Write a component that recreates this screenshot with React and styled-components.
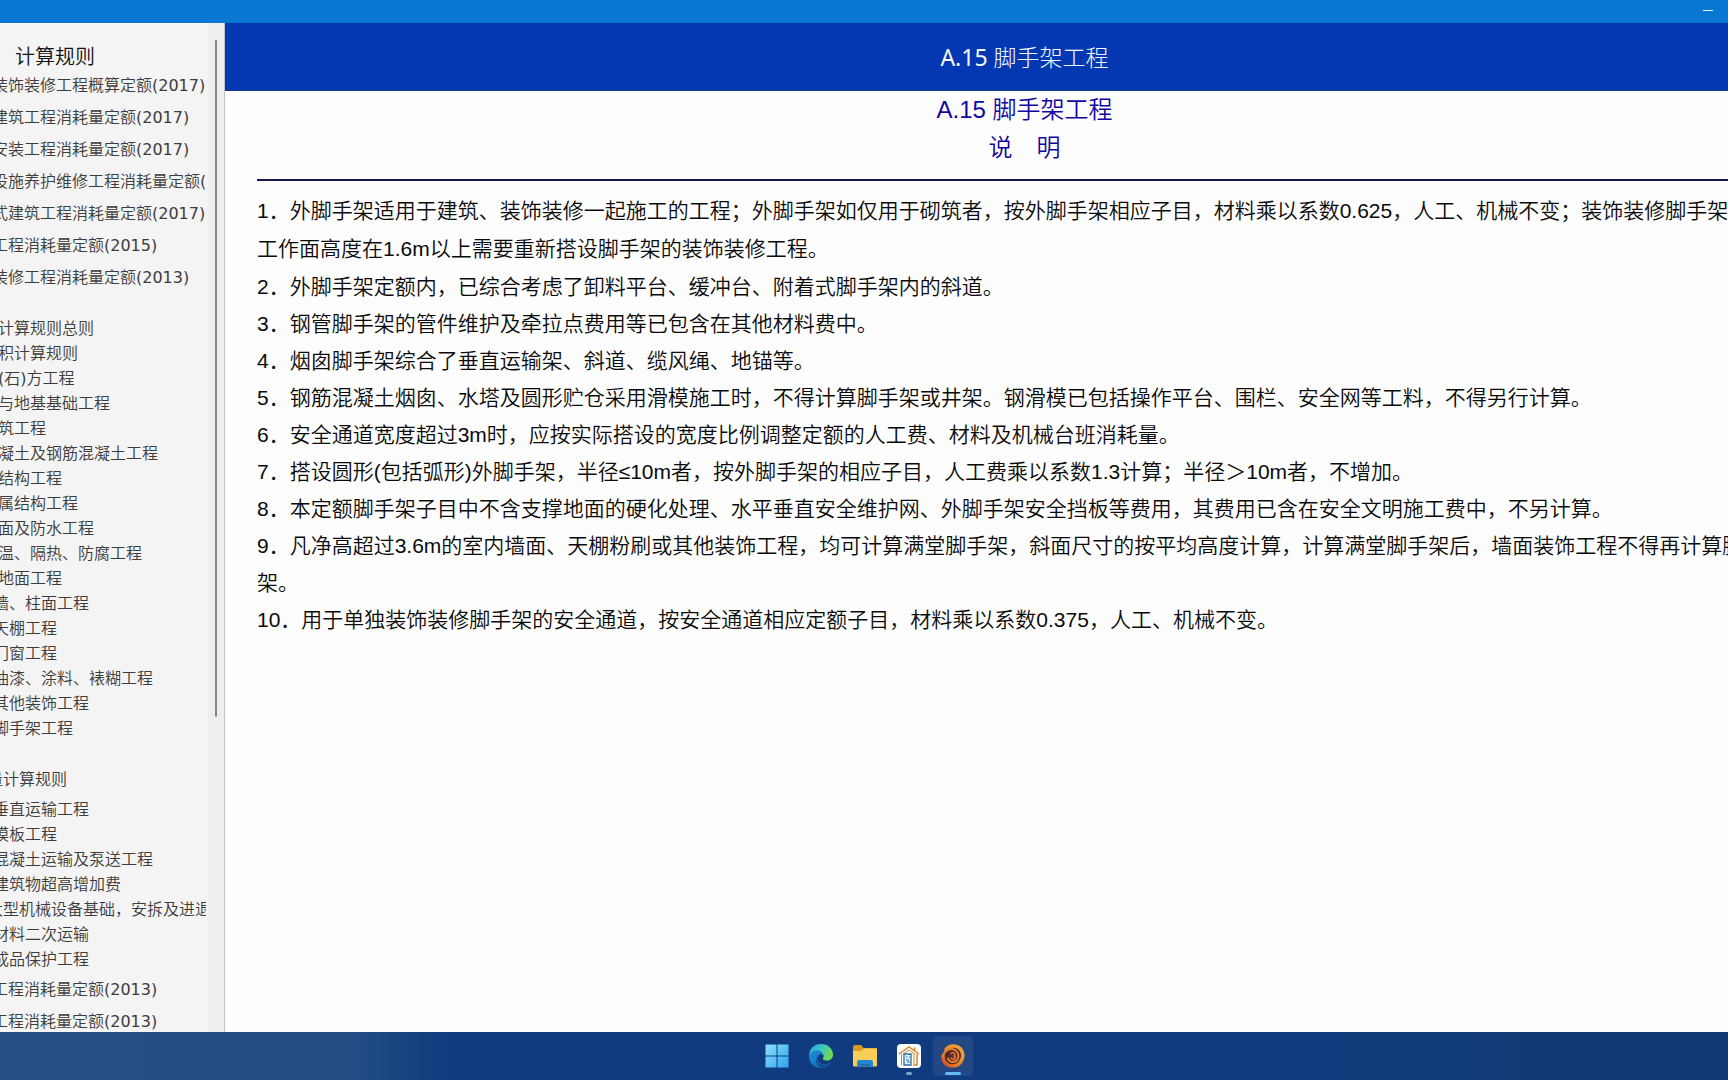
import React from "react";
import styled, { createGlobalStyle } from "styled-components";

const cjk = `"Noto Sans CJK SC DemiLight", "Noto Sans CJK SC", sans-serif`;

const GlobalStyle = createGlobalStyle`
  * { box-sizing: border-box; }
  body { margin: 0; overflow: hidden; background: #fdfdfd; }
  h1, h2, p, ul, ol { margin: 0; padding: 0; font-weight: inherit; }
  button { border: 0; padding: 0; background: none; font: inherit; }
`;

const Screen = styled.div`
  display: flex;
  flex-direction: column;
  height: 100vh;
  overflow: hidden;
  font-family: ${cjk};
  font-weight: 400;
`;

const TitleBar = styled.header`
  display: flex;
  justify-content: flex-end;
  flex: none;
  height: 23px;
  padding-right: 12px;
  background: #0978d3;
`;

const MinimizeButton = styled.button`
  display: flex;
  justify-content: center;
  align-items: center;
  width: 16px;
  height: 20px;
  &::before {
    content: "";
    width: 10px;
    height: 1px;
    background: #e4f6ff;
  }
`;

const Workspace = styled.div`
  display: flex;
  flex: 1;
  min-height: 0;
`;

const Sidebar = styled.nav`
  display: flex;
  flex: none;
  width: 225px;
  overflow: hidden;
  background: #f4f4f4;
  border-right: 1px solid #c4c4c6;
`;

const SidebarBody = styled.div`
  flex: 1;
  min-width: 0;
  overflow: hidden;
  margin-right: 2px;
`;

const SidebarTitle = styled.h2`
  padding: 19px 0 0 15px;
  font-size: 20px;
  line-height: 28px;
  color: #111;
`;

const Group = styled.ul`
  list-style: none;
  margin-left: -16px;
  padding-top: ${(p) => p.$gap || 0}px;
  padding-left: ${(p) => p.$indent}px;
`;

const Entry = styled.a`
  display: block;
  font-family: "DejaVu Sans", ${cjk};
  font-size: 16px;
  line-height: ${(p) => (p.$loose ? 32 : 25)}px;
  white-space: nowrap;
  color: #3c3c3c;
  text-decoration: none;
`;

const ScrollTrack = styled.div`
  flex: none;
  width: 16px;
  padding: 17px 0 0 7px;
  background: #eeeeef;
`;

const ScrollThumb = styled.div`
  width: 2px;
  height: calc(68% + 2px);
  min-height: 40px;
  border-radius: 1px;
  background: #858585;
`;

const Viewport = styled.div`
  flex: 1;
  min-width: 0;
  overflow: hidden;
`;

const Document = styled.main`
  width: calc(100% + 96px);
  color: #0a0a0a;
`;

const Banner = styled.h1`
  height: 68px;
  background: #0438b2;
  border-bottom: 1px solid #173a7c;
  color: #f4fbff;
  font-family: "Noto Sans", "Noto Sans CJK SC Light", ${cjk};
  font-size: 23px;
  line-height: 68px;
  text-align: center;
`;

const Article = styled.article`
  padding: 0 32px;
  font-family: "Liberation Sans", ${cjk};
`;

const Heading = styled.h2`
  font-size: 24px;
  line-height: 38px;
  text-align: center;
  color: #1206a0;
`;

const Clauses = styled.div`
  margin-top: 12px;
  padding-top: 11px;
  border-top: 2px solid #16164f;
  font-size: 21px;
  line-height: 37px;
  p:first-child { line-height: 38px; }
`;

const Taskbar = styled.footer`
  display: flex;
  justify-content: center;
  align-items: center;
  flex: none;
  gap: 4px;
  height: 48px;
  padding-left: 2px;
  background: linear-gradient(90deg, #254f83 0%, #244e83 20%, #103b7e 26%, #103b7e 72%, #113870 100%);
`;

const TaskButton = styled.button`
  position: relative;
  display: flex;
  justify-content: center;
  align-items: center;
  width: 40px;
  height: 40px;
  border-radius: 4px;
  background: ${(p) => (p.$active ? "#224785" : "transparent")};
  &::after {
    content: "";
    position: absolute;
    bottom: 1px;
    width: ${(p) => p.$mark || 0}px;
    height: 3px;
    border-radius: 2px;
    background: ${(p) => (p.$active ? "#62bdf0" : "#7fa5cc")};
  }
`;

const local = [
  "装饰装修工程概算定额(2017)",
  "建筑工程消耗量定额(2017)",
  "安装工程消耗量定额(2017)",
  "设施养护维修工程消耗量定额(2017)",
  "式建筑工程消耗量定额(2017)",
  "工程消耗量定额(2015)",
  "装修工程消耗量定额(2013)",
];
const general = [
  "计算规则总则", "积计算规则", "(石)方工程", "与地基基础工程", "筑工程",
  "凝土及钢筋混凝土工程", "结构工程", "属结构工程", "面及防水工程",
  "温、隔热、防腐工程", "地面工程",
];
const finishing = ["墙、柱面工程", "天棚工程", "门窗工程", "油漆、涂料、裱糊工程", "其他装饰工程", "脚手架工程"];
const measuresHead = ["量计算规则"];
const measures = ["垂直运输工程", "模板工程", "混凝土运输及泵送工程", "建筑物超高增加费"];
const machinery = ["大型机械设备基础，安拆及进退场"];
const measuresEnd = ["材料二次运输", "成品保护工程"];
const older = ["工程消耗量定额(2013)", "工程消耗量定额(2013)"];

const groups = [
  { items: local, indent: 8, loose: true },
  { items: general, indent: 14, gap: 22 },
  { items: finishing, indent: 9 },
  { items: measuresHead, indent: 3, gap: 26 },
  { items: measures, indent: 9, gap: 5 },
  { items: machinery, indent: 3 },
  { items: measuresEnd, indent: 9 },
  { items: older, indent: 8, gap: 2, loose: true },
];

const clauses = [
  "1．外脚手架适用于建筑、装饰装修一起施工的工程；外脚手架如仅用于砌筑者，按外脚手架相应子目，材料乘以系数0.625，人工、机械不变；装饰装修脚手架适用于工作面高度在1.6m以上需要重新搭设脚手架的装饰装修工程。",
  "2．外脚手架定额内，已综合考虑了卸料平台、缓冲台、附着式脚手架内的斜道。",
  "3．钢管脚手架的管件维护及牵拉点费用等已包含在其他材料费中。",
  "4．烟囱脚手架综合了垂直运输架、斜道、缆风绳、地锚等。",
  "5．钢筋混凝土烟囱、水塔及圆形贮仓采用滑模施工时，不得计算脚手架或井架。钢滑模已包括操作平台、围栏、安全网等工料，不得另行计算。",
  "6．安全通道宽度超过3m时，应按实际搭设的宽度比例调整定额的人工费、材料及机械台班消耗量。",
  "7．搭设圆形(包括弧形)外脚手架，半径≤10m者，按外脚手架的相应子目，人工费乘以系数1.3计算；半径＞10m者，不增加。",
  "8．本定额脚手架子目中不含支撑地面的硬化处理、水平垂直安全维护网、外脚手架安全挡板等费用，其费用已含在安全文明施工费中，不另计算。",
  "9．凡净高超过3.6m的室内墙面、天棚粉刷或其他装饰工程，均可计算满堂脚手架，斜面尺寸的按平均高度计算，计算满堂脚手架后，墙面装饰工程不得再计算脚手架。",
  "10．用于单独装饰装修脚手架的安全通道，按安全通道相应定额子目，材料乘以系数0.375，人工、机械不变。",
];

function StartIcon() {
  return (
    <svg width="24" height="24" viewBox="0 0 24 24" aria-hidden="true">
      <defs>
        <linearGradient id="win" x1="0" y1="0" x2="1" y2="1">
          <stop offset="0" stopColor="#8fe0fb" />
          <stop offset="1" stopColor="#2ba4ee" />
        </linearGradient>
      </defs>
      <path fill="url(#win)" d="M.5 .5h11v11H.5zM12.500.5h11v11h-11zM.5 12.500h11v11H.5zM12.500 12.500h11v11h-11z" />
    </svg>
  );
}

function EdgeIcon() {
  return (
    <svg width="26" height="26" viewBox="0 0 26 26" aria-hidden="true">
      <defs>
        <linearGradient id="edgeTop" x1="0" y1="0" x2="1" y2="0.4">
          <stop offset="0" stopColor="#2aa5dc" />
          <stop offset="0.5" stopColor="#37c3c8" />
          <stop offset="1" stopColor="#6fdb55" />
        </linearGradient>
        <linearGradient id="edgeLow" x1="0" y1="0" x2="1" y2="1">
          <stop offset="0" stopColor="#1b8fdc" />
          <stop offset="1" stopColor="#1260ab" />
        </linearGradient>
      </defs>
      <path fill="url(#edgeTop)" d="M1 12C1.500 5.500 6.500 1 13 1c7 0 12 5 12 10.500 0 4-3 6-6 6-3.500 0-4.500-1.500-4-2.500 1-1.500 1-3-.5-4.500C11 7 4 7.500 1 12z" />
      <path fill="url(#edgeLow)" d="M1 12.500C2.500 8.500 6 7.500 9 7.500c3.500 0 6 2 6 4.500-1.500-1.500-4-1-5 1-1.500 3.500 1 8 6 8.500 2.500.3 5-.5 7-2C21 23 17.500 25 13 25 6 25 .5 19.500 1 12.500z" />
      <path fill="#124f93" d="M9.500 13.500c-1.500 4 1.500 8 6.500 8.500 2.500.2 5-.5 7-2-2 3-5 4.800-8.500 5-5-1-8.500-6.500-5-11.500z" />
    </svg>
  );
}

function FolderIcon() {
  return (
    <svg width="26" height="26" viewBox="0 0 26 26" aria-hidden="true">
      <path fill="#d99a1e" d="M1 4c0-1 .7-2 2-2h6l2.500 3H24c.6 0 1 .4 1 1v4H1z" />
      <path fill="#f8cf56" d="M1 8h8l3-2.500h12c.6 0 1 .4 1 1V22c0 1-.5 1.500-1.500 1.500h-21C1.500 23.500 1 23 1 22z" />
      <path fill="#2387d0" d="M5 24v-5c0-1.200.8-2 2-2h12c1.200 0 2 .8 2 2v5h-3v-3H8v3z" />
      <path fill="#1b6fb8" d="M8 21h10v2.500H8z" />
    </svg>
  );
}

function HouseIcon() {
  return (
    <svg width="26" height="26" viewBox="0 0 26 26" aria-hidden="true">
      <rect x="1" y="1" width="24" height="24" rx="4" fill="#fdfdfb" />
      <g fill="none" stroke="#d08a35" strokeWidth="1.500">
        <path d="M3 11L13 4l10 7M21 11v11h-4M18.500 4.500v3" />
        <path d="M5.500 10.500V22M7 11l6-4 6 4M18 11v10" strokeWidth="1" />
      </g>
      <path fill="#e8f3fb" stroke="#2c6ea8" strokeWidth="1.300" d="M8 11h7v11H8z" />
      <path stroke="#2c6ea8" d="M10 14h1.500M13 14h1M10 17h3M11 19h3" />
    </svg>
  );
}

function SwirlIcon() {
  return (
    <svg width="26" height="26" viewBox="0 0 26 26" aria-hidden="true">
      <defs>
        <linearGradient id="swirl" x1="1" y1="0" x2="0" y2="1">
          <stop offset="0" stopColor="#f7a93a" />
          <stop offset="0.6" stopColor="#e8812a" />
          <stop offset="1" stopColor="#d8452a" />
        </linearGradient>
      </defs>
      <circle cx="13" cy="13" r="9" fill="#4a2b2e" />
      <g fill="none" strokeLinecap="round">
        <path stroke="url(#swirl)" strokeWidth="3.500" d="M6 6.500C10 1.500 18 2 21.500 7.500c3.500 6-.5 14.500-8 15.500C7 23.500 2.500 18.500 3 13" />
        <path stroke="#e8812a" strokeWidth="2" d="M3 13c1-5.500 7-8.500 12-6 4.500 2.500 4.500 9.500 0 11.500-3 1.300-6.500 0-7-3" />
        <path stroke="#d9622a" strokeWidth="2" d="M11 10.500c2-1.500 4.500-.5 4 1.300-.3 1-1.500 1.200-2 1.200 2 0 3 1.500 2 2.500-1 1.200-3 .8-4-.2" />
      </g>
    </svg>
  );
}

export default function App() {
  return (
    <Screen>
      <GlobalStyle />
      <TitleBar>
        <MinimizeButton aria-label="最小化" />
      </TitleBar>
      <Workspace>
        <Sidebar aria-label="计算规则">
          <SidebarBody>
            <SidebarTitle>计算规则</SidebarTitle>
            {groups.map((group, g) => (
              <Group key={g} $indent={group.indent} $gap={group.gap}>
                {group.items.map((item, i) => (
                  <li key={i}>
                    <Entry href="#" $loose={group.loose}>{item}</Entry>
                  </li>
                ))}
              </Group>
            ))}
          </SidebarBody>
          <ScrollTrack>
            <ScrollThumb />
          </ScrollTrack>
        </Sidebar>
        <Viewport>
          <Document>
            <Banner>A.15 脚手架工程</Banner>
            <Article>
              <Heading>A.15 脚手架工程</Heading>
              <Heading>说　明</Heading>
              <Clauses>
                {clauses.map((text) => (
                  <p key={text}>{text}</p>
                ))}
              </Clauses>
            </Article>
          </Document>
        </Viewport>
      </Workspace>
      <Taskbar>
        <TaskButton aria-label="开始"><StartIcon /></TaskButton>
        <TaskButton aria-label="Edge"><EdgeIcon /></TaskButton>
        <TaskButton aria-label="文件资源管理器"><FolderIcon /></TaskButton>
        <TaskButton aria-label="定额" $mark={6}><HouseIcon /></TaskButton>
        <TaskButton aria-label="计算规则" $active $mark={16}><SwirlIcon /></TaskButton>
      </Taskbar>
    </Screen>
  );
}
